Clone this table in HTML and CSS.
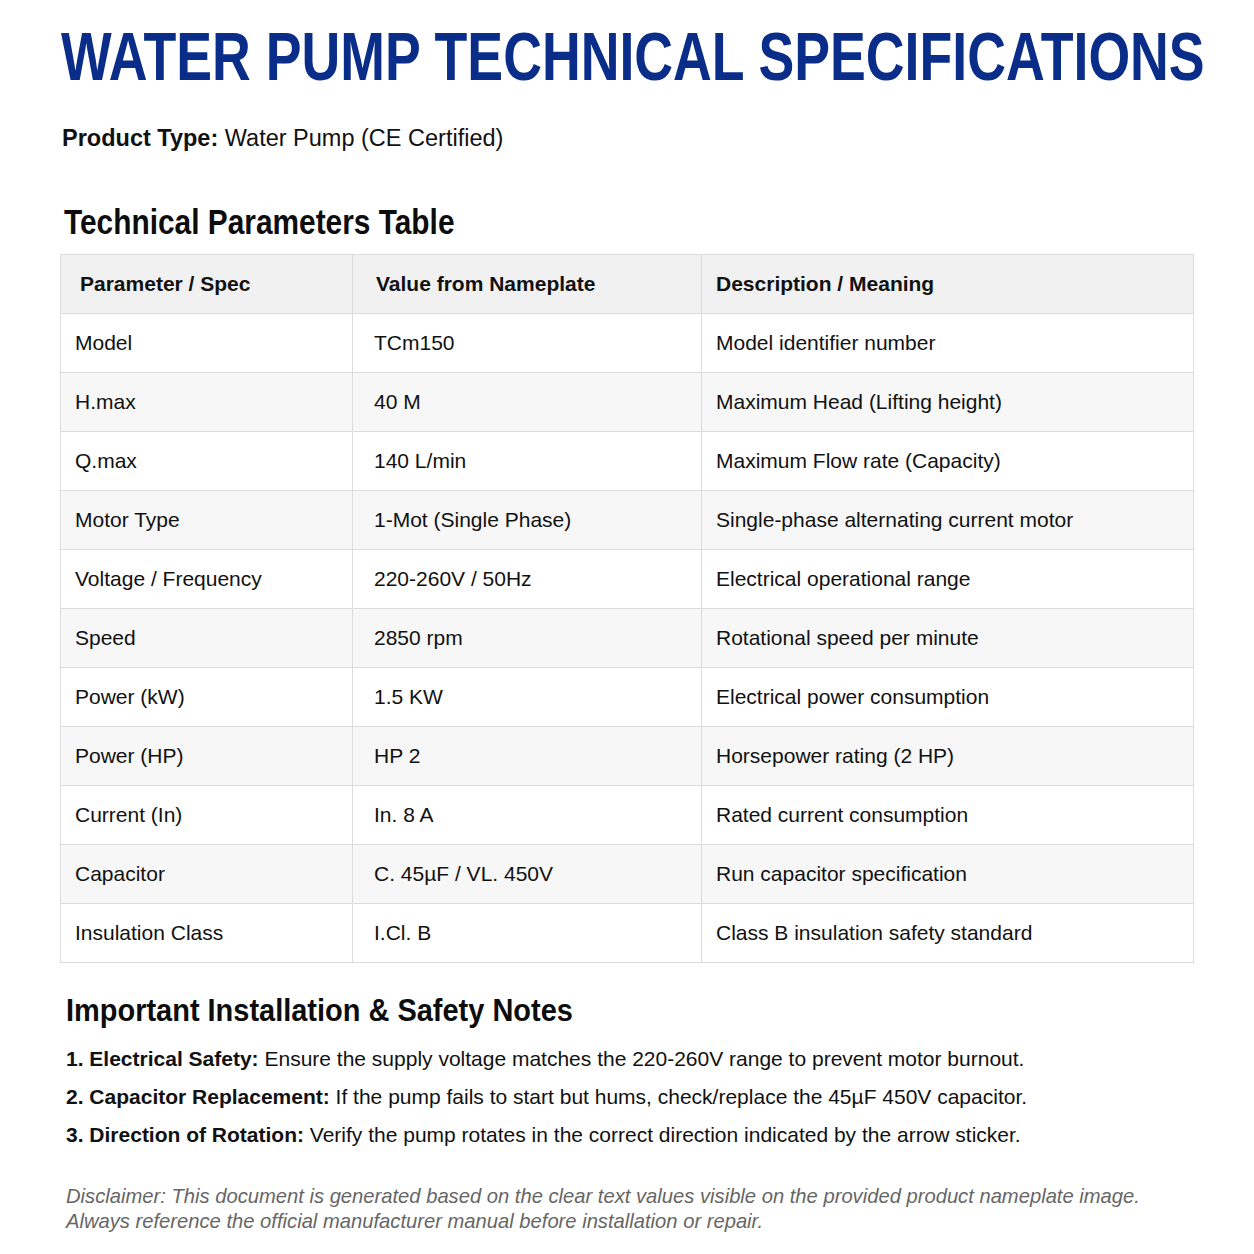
FILE: index.html
```html
<!DOCTYPE html>
<html lang="en">
<head>
<meta charset="utf-8">
<title>Water Pump Technical Specifications</title>
<link rel="stylesheet" href="styles.css">
</head>
<body>
<main class="page">
  <h1 class="title">WATER PUMP TECHNICAL SPECIFICATIONS</h1>
  <p class="product"><strong>Product Type:</strong> Water Pump (CE Certified)</p>

  <h2 class="section-title table-title">Technical Parameters Table</h2>
  <table class="spec-table">
    <colgroup>
      <col class="col-param">
      <col class="col-value">
      <col class="col-desc">
    </colgroup>
    <thead>
      <tr><th>Parameter / Spec</th><th>Value from Nameplate</th><th>Description / Meaning</th></tr>
    </thead>
    <tbody>
      <tr><td>Model</td><td>TCm150</td><td>Model identifier number</td></tr>
      <tr><td>H.max</td><td>40 M</td><td>Maximum Head (Lifting height)</td></tr>
      <tr><td>Q.max</td><td>140 L/min</td><td>Maximum Flow rate (Capacity)</td></tr>
      <tr><td>Motor Type</td><td>1-Mot (Single Phase)</td><td>Single-phase alternating current motor</td></tr>
      <tr><td>Voltage / Frequency</td><td>220-260V / 50Hz</td><td>Electrical operational range</td></tr>
      <tr><td>Speed</td><td>2850 rpm</td><td>Rotational speed per minute</td></tr>
      <tr><td>Power (kW)</td><td>1.5 KW</td><td>Electrical power consumption</td></tr>
      <tr><td>Power (HP)</td><td>HP 2</td><td>Horsepower rating (2 HP)</td></tr>
      <tr><td>Current (In)</td><td>In. 8 A</td><td>Rated current consumption</td></tr>
      <tr><td>Capacitor</td><td>C. 45µF / VL. 450V</td><td>Run capacitor specification</td></tr>
      <tr><td>Insulation Class</td><td>I.Cl. B</td><td>Class B insulation safety standard</td></tr>
    </tbody>
  </table>

  <h2 class="section-title notes-title">Important Installation &amp; Safety Notes</h2>
  <ol class="notes">
    <li><strong>1. Electrical Safety:</strong> Ensure the supply voltage matches the 220-260V range to prevent motor burnout.</li>
    <li><strong>2. Capacitor Replacement:</strong> If the pump fails to start but hums, check/replace the 45µF 450V capacitor.</li>
    <li><strong>3. Direction of Rotation:</strong> Verify the pump rotates in the correct direction indicated by the arrow sticker.</li>
  </ol>

  <p class="disclaimer">Disclaimer: This document is generated based on the clear text values visible on the provided product nameplate image.<br>Always reference the official manufacturer manual before installation or repair.</p>
</main>
</body>
</html>
```

FILE: styles.css
```css
html, body {
  margin: 0;
  padding: 0;
  background: #ffffff;
}

body {
  font-family: "Liberation Sans", Arial, sans-serif;
  color: #111111;
}

.page {
  padding: 22px 60px 20px 60px;
}

.title {
  width: max-content;
  margin: 0 0 0 1px;
  font-weight: 700;
  font-size: 68px;
  line-height: 68px;
  color: #0b2d8a;
  white-space: nowrap;
  transform: scaleX(0.789);
  transform-origin: left center;
}

.product {
  margin: 34px 0 0 2px;
  font-size: 23.5px;
  line-height: 28px;
}

.section-title {
  width: max-content;
  font-weight: 700;
  color: #0d0d0d;
  white-space: nowrap;
  transform-origin: left center;
}

.table-title {
  margin: 50px 0 0 4px;
  font-size: 35px;
  line-height: 40px;
  transform: scaleX(0.853);
}

.spec-table {
  margin-top: 12px;
  width: 1134px;
  table-layout: fixed;
  border-collapse: collapse;
  border: 1px solid #dcdcdc;
  font-size: 21px;
}

.col-param { width: 292px; }
.col-value { width: 349px; }

.spec-table th,
.spec-table td {
  height: 58px;
  padding: 0 14px 0 14px;
  border: 1px solid #dcdcdc;
  text-align: left;
  vertical-align: middle;
  font-weight: 400;
}

.spec-table th {
  background: #f1f1f1;
  font-weight: 700;
}

.spec-table th:first-child { padding-left: 19px; }
.spec-table th:nth-child(2) { padding-left: 23px; }
.spec-table td:nth-child(2) { padding-left: 21px; }

.spec-table tbody tr:nth-child(even) td {
  background: #f7f7f7;
}

.notes-title {
  margin: 27px 0 0 6px;
  font-size: 32px;
  line-height: 40px;
  transform: scaleX(0.905);
}

.notes {
  list-style: none;
  margin: 10px 0 0 6px;
  padding: 0;
  font-size: 21px;
  line-height: 38px;
}

.notes strong {
  font-weight: 700;
}

.disclaimer {
  margin: 30px 0 0 6px;
  font-style: italic;
  font-size: 20.2px;
  line-height: 25px;
  color: #666666;
}
```
